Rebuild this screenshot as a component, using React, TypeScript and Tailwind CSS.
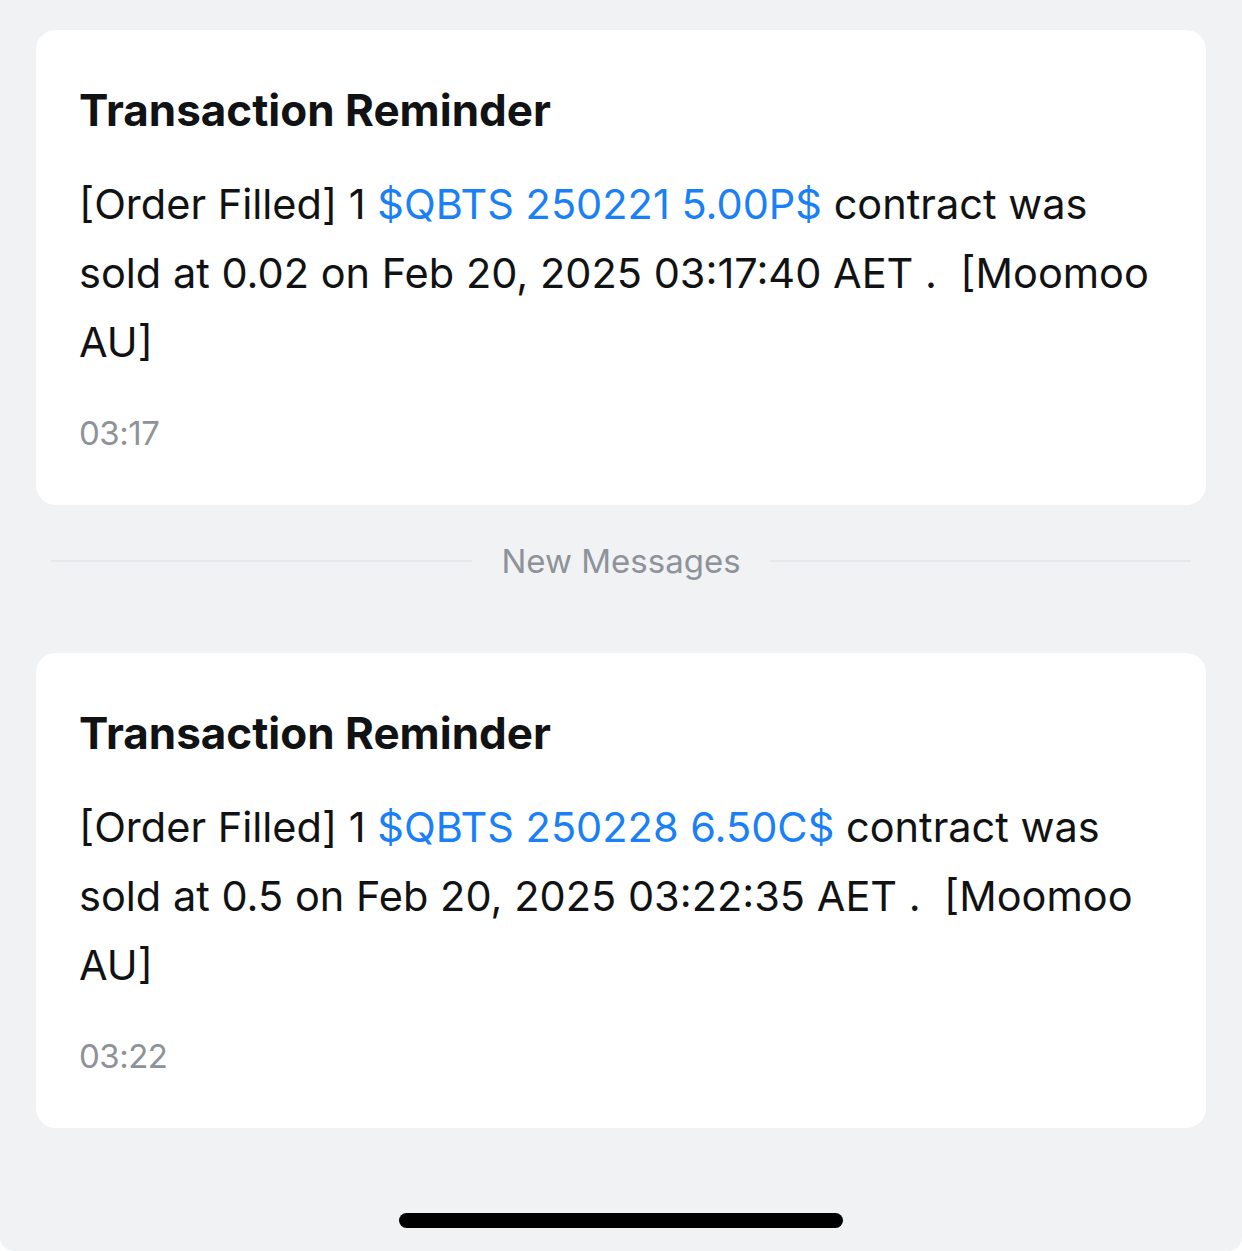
const font = { fontFamily: "Inter, 'Noto Sans', sans-serif" };

type Msg = {
  link: string;
  price: string;
  stamp: string;
  time: string;
};

const messages: Msg[] = [
  { link: "$QBTS 250221 5.00P$", price: "0.02", stamp: "03:17:40", time: "03:17" },
  { link: "$QBTS 250228 6.50C$", price: "0.5", stamp: "03:22:35", time: "03:22" },
];

const Card = ({ m }: { m: Msg }) => (
  <div className="bg-white rounded-[20px] h-[475px] pl-[43px] pr-[28px] pt-[52px]">
    <h2 className="text-[44px] leading-[56px] font-bold text-[#111214]">
      Transaction Reminder
    </h2>
    <p className="mt-[32px] text-[41.5px] leading-[69px] text-[#111214]">
      [Order Filled] 1 <span className="text-[#1a80f7]">{m.link}</span> contract was sold at{" "}
      {m.price} on Feb 20, 2025 {m.stamp} AET .&nbsp; [Moomoo AU]
    </p>
    <div className="mt-[36px] text-[33px] leading-[40px] text-[#8e9299] tracking-[-0.5px]">
      {m.time}
    </div>
  </div>
);

const App = () => {
  return (
    <div className="bg-white min-h-[1251px]" style={font}>
      <div className="bg-[#f1f2f4] min-h-[1251px] rounded-b-[14px] pt-[30px] px-[36px] flex flex-col">
        <Card m={messages[0]} />
        <div className="flex items-center gap-[29px] mx-[15px] h-[148px] pb-[36px]">
          <div className="flex-1 h-[2px] bg-[#e7e8eb]" />
          <span className="text-[33px] text-[#8e9299] leading-none">New Messages</span>
          <div className="flex-1 h-[2px] bg-[#e7e8eb]" />
        </div>
        <Card m={messages[1]} />
        <div className="flex justify-center mt-[85px]">
          <div className="w-[444px] h-[15px] rounded-full bg-black" />
        </div>
      </div>
    </div>
  );
};

export default App;
